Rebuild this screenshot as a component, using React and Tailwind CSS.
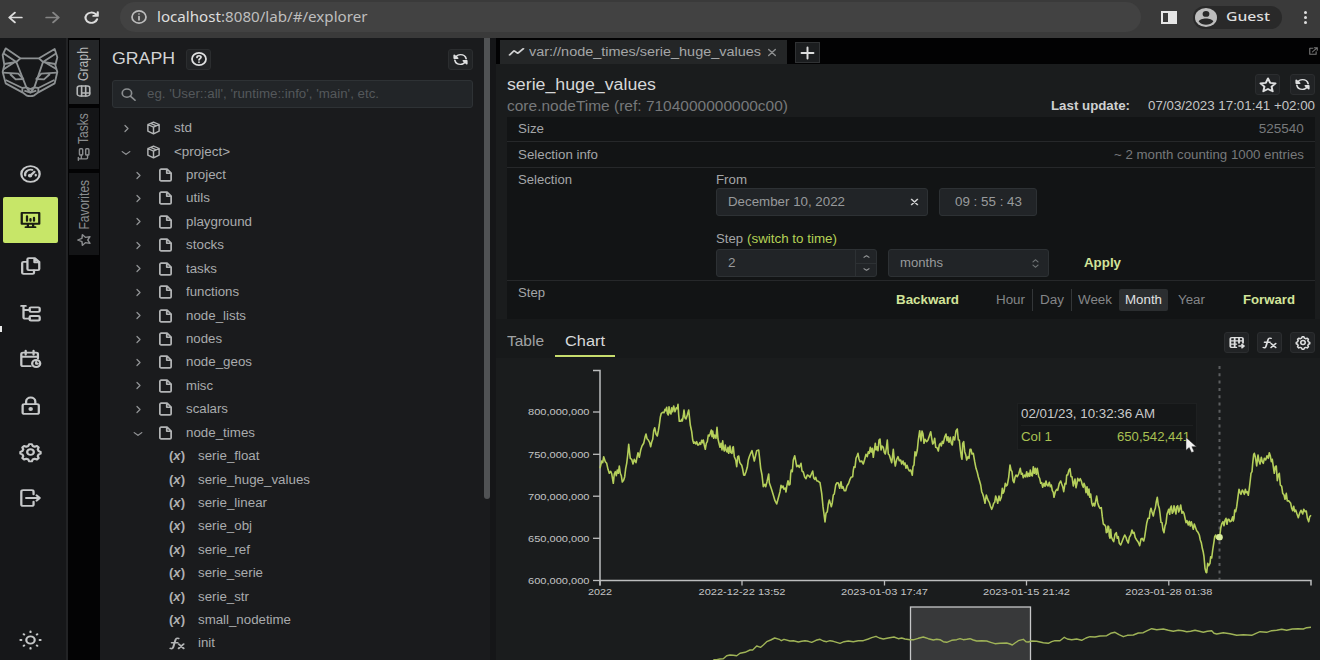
import { useLayoutEffect, useRef } from "react";

// Text squeezed or stretched to an exact width.
const T = ({ w, className = "", right = false, children }) => {
  const ref = useRef(null);

  useLayoutEffect(() => {
    const el = ref.current;
    el.style.transform = "none";
    const natural = el.getBoundingClientRect().width;
    el.style.transform = `scaleX(${w / natural})`;
  }, [w, children]);

  return (
    <span className={`flex shrink-0 whitespace-nowrap ${right ? "justify-end" : ""} ${className}`} style={{ width: w }}>
      <span ref={ref} className={`inline-block shrink-0 ${right ? "origin-right" : "origin-left"}`}>
        {children}
      </span>
    </span>
  );
};

// The vertical tabs are turned, so their box size has to come from the layout, not the screen.
const TurnedText = ({ w, children }) => {
  const ref = useRef(null);

  useLayoutEffect(() => {
    ref.current.style.transform = `scaleX(${w / ref.current.offsetWidth})`;
  }, [w, children]);

  return (
    <span className="flex shrink-0 whitespace-nowrap" style={{ width: w }}>
      <span ref={ref} className="inline-block shrink-0 origin-left">
        {children}
      </span>
    </span>
  );
};

const Svg = ({ className = "", sw = 2, children }) => (
  <svg
    viewBox="0 0 24 24"
    preserveAspectRatio="none"
    fill="none"
    stroke="currentColor"
    strokeWidth={sw}
    strokeLinecap="round"
    strokeLinejoin="round"
    className={`shrink-0 overflow-visible ${className}`}
  >
    {children}
  </svg>
);

const STAR = "M12 2l2.900 6.700 7.100.8-5.200 4.900 1.400 7.100-6.200-3.500-6.200 3.500 1.400-7.100L2 9.500l7.100-.8z";
const GEAR =
  "M9.500 4l1-2.500h3l1 2.500 2.300 1 2.500-1 2 2-1 2.500 1 2.200 2.200 1v2.600l-2.200 1-1 2.200 1 2.500-2 2-2.500-1-2.300 1-1 2.500h-3l-1-2.500-2.300-1-2.500 1-2-2 1-2.500-1-2.200-2.200-1v-2.600l2.200-1 1-2.200-1-2.500 2-2 2.500 1z";

const GLYPHS = {
  gauge: (
    <>
      <circle cx="12" cy="12" r="10.500" />
      <path d="M12 14l4.500-5M6 14a6.300 6.300 0 0 1 8-7.500M18 13v1" />
      <circle cx="11.500" cy="14" r="1.200" />
    </>
  ),
  monitor: (
    <>
      <path d="M2 2.500h20v14.500H2zM9 17v4M15 17v4M6.500 21.500h11" />
      <path d="M8 13V7M12 13v-2.500M16 13V9" />
    </>
  ),
  copy: (
    <>
      <path d="M10 1.500h7l5 5V16a1.500 1.500 0 0 1-1.500 1.500H10A1.500 1.500 0 0 1 8.500 16V3A1.500 1.500 0 0 1 10 1.500zM16.500 2v5H22" />
      <path d="M8 6.500H4A1.500 1.500 0 0 0 2.500 8v13A1.500 1.500 0 0 0 4 22.500h10.500A1.500 1.500 0 0 0 16 21v-3" />
    </>
  ),
  tree: (
    <>
      <path d="M1.500 2.500h5M4 3v14.500a2 2 0 0 0 2 2h5M4 8h7" />
      <rect x="11" y="4.500" width="11.500" height="6" rx="1.500" />
      <rect x="11" y="16" width="11.500" height="6" rx="1.500" />
    </>
  ),
  calendar: (
    <>
      <path d="M12 21.500H3.500A2 2 0 0 1 1.500 19.500V5.500a2 2 0 0 1 2-2h15a2 2 0 0 1 2 2V11M1.500 9h19M6.500 1v5M15.500 1v5" />
      <circle cx="18.500" cy="18" r="4.600" />
      <path d="M18.500 16v2.300h1.700" />
    </>
  ),
  lock: (
    <>
      <rect x="3" y="9.500" width="18.500" height="13" rx="2" />
      <path d="M7 9V6a5 5 0 0 1 10.500 0v3" />
      <circle cx="12.200" cy="16" r="1.300" fill="currentColor" />
    </>
  ),
  gear: (
    <>
      <path d={GEAR} />
      <circle cx="12" cy="12" r="3.800" />
    </>
  ),
  logout: <path d="M15.500 7V3.500a2 2 0 0 0-2-2h-10a2 2 0 0 0-2 2v17a2 2 0 0 0 2 2h10a2 2 0 0 0 2-2V17M7 12h15.500M19 8.500l3.500 3.500-3.500 3.500" />,
  sun: (
    <>
      <circle cx="12" cy="12" r="4.800" />
      <path d="M12 .5v1M12 22.500v1M.5 12h1M22.500 12h1M4.200 4.200l.6.6M19.200 19.200l.6.6M4.200 19.800l.6-.6M19.200 4.800l.6-.6" />
    </>
  ),
  box: <path d="M12 2l9 4v11.500L12 22l-9-4.500V6zM3 6l9 4.500L21 6M12 10.500V22M7.500 4l9 4.300" />,
  file: <path d="M5 2h9.500L21 8.500V20a2 2 0 0 1-2 2H5a2 2 0 0 1-2-2V4a2 2 0 0 1 2-2zM14 2.500V9h6.500" />,
  fx: (
    <>
      <path d="M2 21c3 1.500 4-.5 4.800-4L9.500 6c.8-3.500 2.500-4.500 5-3.300M4 10.500h9" />
      <path d="M14.500 13l7.500 8M22 13l-7.500 8" />
    </>
  ),
  refresh: (
    <>
      <path d="M4 8C6 4.500 9 3 12 3c4.500 0 8 2.800 9 7.500M20 16c-2 3.500-5 5-8 5-4.500 0-8-2.800-9-7.500" />
      <path d="M2 4v5.500h5.500zM22 20v-5.500h-5.500z" fill="currentColor" />
    </>
  ),
  star: <path d={STAR} />,
  table: (
    <>
      <path d="M11 21H4a2 2 0 0 1-2-2V5a2 2 0 0 1 2-2h15a2 2 0 0 1 2 2v8M2 9h19M2 15h9M8.500 3v18M15 3v10" />
      <path d="M15 18.500h7M19.500 15.500l3 3-3 3" />
    </>
  ),
  help: (
    <>
      <circle cx="12" cy="12" r="10.500" />
      <path d="M9 9.300c.2-3.800 6.200-3.500 6-.2-.1 2-3 2.300-3 4.400M12 17.200v.3" />
    </>
  ),
  right: <path d="M8 4l8 8-8 8" />,
  down: <path d="M3 8l9 8 9-8" />,
  up: <path d="M3 16l9-8 9 8" />,
  close: <path d="M4 4l16 16M20 4L4 20" />,
};

const Glyph = ({ name, className, sw }) => (
  <Svg className={className} sw={sw}>
    {GLYPHS[name]}
  </Svg>
);

const NAV = ["gauge", "monitor", "copy", "tree", "calendar", "lock", "gear", "logout"];

const TREE = [
  { label: "std", w: 18, level: 0 },
  { label: "<project>", w: 56, level: 0, open: true },
  { label: "project", w: 40, level: 1 },
  { label: "utils", w: 24, level: 1 },
  { label: "playground", w: 66, level: 1 },
  { label: "stocks", w: 38, level: 1 },
  { label: "tasks", w: 31, level: 1 },
  { label: "functions", w: 53, level: 1 },
  { label: "node_lists", w: 60, level: 1 },
  { label: "nodes", w: 36, level: 1 },
  { label: "node_geos", w: 66, level: 1 },
  { label: "misc", w: 27, level: 1 },
  { label: "scalars", w: 42, level: 1 },
  { label: "node_times", w: 69, level: 1, open: true },
  { label: "serie_float", w: 61.5, level: 2 },
  { label: "serie_huge_values", w: 112, level: 2 },
  { label: "serie_linear", w: 69, level: 2 },
  { label: "serie_obj", w: 54, level: 2 },
  { label: "serie_ref", w: 52, level: 2 },
  { label: "serie_serie", w: 65, level: 2 },
  { label: "serie_str", w: 51, level: 2 },
  { label: "small_nodetime", w: 93, level: 2 },
  { label: "init", w: 17, level: 2, fn: true },
];

const PAD = ["pl-[20px]", "pl-[32px]", "pl-[69px]"];

const BrowserBar = () => (
  <header className="flex h-[38px] shrink-0 items-center bg-[#3a3a3a] pb-[4px] font-['Noto_Sans',sans-serif] text-[#dcdcdc]">
    <Svg className="ml-[8px] h-[13px] w-[15px]" sw={3.200}>
      <path d="M22 12H3M11 3l-9 9 9 9" />
    </Svg>
    <Svg className="ml-[22px] h-[13px] w-[15px] text-[#858585]" sw={3.200}>
      <path d="M2 12h19M13 3l9 9-9 9" />
    </Svg>
    <Svg className="ml-[24px] h-[13px] w-[15px]" sw={3.400}>
      <path d="M21 15a9.500 9.500 0 1 1-2.500-9.500L21 8M22 2v7h-7" />
    </Svg>
    <div className="ml-[21px] flex h-[30px] w-[1021px] items-center rounded-full bg-[#424242] pl-[11px]">
      <Svg className="h-[14px] w-[16px] text-[#bdbdbd]" sw={2.600}>
        <circle cx="12" cy="12" r="10.500" />
        <path d="M12 11v6M12 6.800v.2" />
      </Svg>
      <T w={210.500} className="mt-[-1px] ml-[9.500px] text-[14px] text-[#bebebe]">
        <span className="text-[#dedede]">localhost</span>:8080/lab/#/explorer
      </T>
    </div>
    <div className="ml-[20px] flex h-[13px] w-[16px] justify-start bg-[#e6e6e6] p-[2px]">
      <div className="w-[5px] bg-[#3a3a3a]" />
    </div>
    <div className="ml-[16px] flex h-[23px] w-[89px] items-center rounded-full bg-[#292929] pl-[2px]">
      <svg viewBox="0 0 24 24" preserveAspectRatio="none" className="h-[19px] w-[22px]">
        <circle cx="12" cy="12" r="12" fill="#bdbdbd" />
        <circle cx="12" cy="7.500" r="3.700" fill="#292929" />
        <path d="M4 17c1.500-5 14.500-5 16 0-4 5.500-12 5.500-16 0z" fill="#292929" />
      </svg>
      <T w={44} className="ml-[9px] text-[13px] font-medium text-[#dedede]">
        Guest
      </T>
    </div>
    <div className="ml-[22px] flex flex-col gap-[2px]">
      <i className="size-[3px] rounded-full bg-[#dedede]" />
      <i className="size-[3px] rounded-full bg-[#dedede]" />
      <i className="size-[3px] rounded-full bg-[#dedede]" />
    </div>
  </header>
);

const Logo = () => (
  <svg viewBox="4 138 174 156" className="ml-[1px] h-[52px] w-[58px]" fill="none" stroke="#8d9193" strokeWidth="5.500" strokeLinejoin="round">
    <path d="M18 145L62 175H118L165 147L173 172L167 196L173 216L165 250L116 277L104 286Q92 291 80 286L68 277L18 250L9 216L14 195L9 165Z" />
    <path d="M11 160L50 186L62 175M170 160L130 186L118 175M14 192L50 186L80 262M167 192L130 186L104 262" />
    <path d="M42 188L12 208M138 188L171 208M10 218L56 221L71 237L48 238L31 222M172 218L125 221L110 237L133 238L151 222" />
    <path d="M18 240L68 264L80 262L92 267L104 262L116 264L164 240M68 264V277M116 277V264M74 272L92 278L110 272M80 262L92 278L104 262" />
  </svg>
);

const Sidebar = () => (
  <nav className="flex w-[68px] shrink-0 flex-col border-r-2 border-[#222325] bg-[#161719] pt-[8px] text-[#c6c8c9]">
    <Logo />
    <div className="mt-[52.500px] flex flex-col pl-[2.500px]">
      {NAV.map((name) => (
        <div
          key={name}
          className={`flex h-[46.400px] w-[55.500px] items-center justify-center ${name === "monitor" ? "rounded-[2px] bg-[#c7e668] text-[#1a1d12]" : ""}`}
        >
          <Glyph name={name} className="h-[18px] w-[21px]" sw={2.600} />
        </div>
      ))}
    </div>
    <div className="mt-[109px] flex w-[61px] justify-center">
      <Glyph name="sun" className="h-[18px] w-[21px]" sw={2.500} />
    </div>
  </nav>
);

const SideTab = ({ label, w, className, children }) => (
  <div className={`flex w-[30px] items-center justify-center ${className}`}>
    <div className="flex shrink-0 -rotate-90 items-center gap-[4px] text-[14px] leading-[16px]">
      {children}
      <TurnedText w={w}>{label}</TurnedText>
    </div>
  </div>
);

const SideTabs = () => (
  <div className="flex w-[32px] shrink-0 flex-col gap-[4px] bg-[#030304] pt-[2px] pl-[1px] text-[#8b8d8f]">
    <SideTab label="Graph" w={34} className="h-[64px] bg-[#242628] pr-[2px] text-[#b4b6b7]">
      <Svg className="h-[15px] w-[12px]" sw={2.600}>
        <rect x="2" y="2" width="20" height="20" rx="4" />
        <path d="M2 9h20M2 15.500h20M8 9v13" />
      </Svg>
    </SideTab>
    <SideTab label="Tasks" w={31} className="h-[61px] bg-[#141517] pr-[2px] pb-[3px]">
      <Glyph name="tree" className="h-[13px] w-[13px]" sw={2.600} />
    </SideTab>
    <SideTab label="Favorites" w={50} className="h-[82px] bg-[#141517] pr-[2px] pb-[3px]">
      <Glyph name="star" className="h-[15px] w-[13px]" sw={2.400} />
    </SideTab>
  </div>
);

const IconButton = ({ name, className = "", icon = "h-[13px] w-[15px]" }) => (
  <button className={`flex h-[21px] w-[25px] shrink-0 items-center justify-center rounded-[3px] border border-[#2b2d2f] bg-[#212325] text-[#dedfe0] ${className}`}>
    <Glyph name={name} className={icon} sw={2.700} />
  </button>
);

const TreeRow = ({ label, w, level, open, fn }) => (
  <div className={`flex h-[23.430px] items-center ${PAD[level]}`}>
    {level < 2 && (
      <span className="flex w-[12px] justify-center text-[#909294]">
        <Glyph name={open ? "down" : "right"} className={open ? "mt-[3px] h-[8px] w-[10px]" : "h-[9px] w-[9px]"} sw={3.400} />
      </span>
    )}
    {level === 0 && <Glyph name="box" className="ml-[14px] h-[14px] w-[15px] text-[#b2b4b5]" sw={2.300} />}
    {level === 1 && <Glyph name="file" className="ml-[14px] h-[14px] w-[15px] text-[#b2b4b5]" sw={2.800} />}
    {level === 2 && !fn && (
      <T w={16} className="text-[13px] leading-[16px] font-bold text-[#afb1b2]">
        (<i>x</i>)
      </T>
    )}
    {fn && <Glyph name="fx" className="h-[13px] w-[16px] text-[#b2b4b5]" sw={3} />}
    <T w={w} className="ml-[13px] text-[12.500px] leading-[16px] text-[#a9abad]">
      {label}
    </T>
  </div>
);

const GraphPanel = () => (
  <aside className="flex w-[396px] shrink-0 bg-[#1a1b1d]">
    <div className="flex w-[384px] flex-col">
      <div className="flex items-center pt-[10.500px] pr-[11px] pl-[12px]">
        <T w={63} className="text-[16px] leading-[20px] text-[#d3d4d5]">
          GRAPH
        </T>
        <IconButton name="help" className="ml-[11px]" icon="h-[14px] w-[16px]" />
        <IconButton name="refresh" className="ml-auto" />
      </div>
      <div className="mt-[10.500px] ml-[12px] flex h-[28px] w-[361px] items-center rounded-[3px] border border-[#2e3235] bg-[#222528] pl-[8px]">
        <Svg className="h-[13px] w-[15px] text-[#8b8e90]" sw={2.700}>
          <circle cx="9.500" cy="9.500" r="7.500" />
          <path d="M15 15l7.500 7.500" />
        </Svg>
        <T w={232} className="ml-[11px] text-[12.500px] text-[#54585b]">
          eg. 'User::all', 'runtime::info', 'main', etc.
        </T>
      </div>
      <div className="mt-[8.500px] flex flex-col">
        {TREE.map((row) => (
          <TreeRow key={row.label} {...row} />
        ))}
      </div>
    </div>
    <div className="h-[461px] w-[6px] rounded-b-[3px] bg-[#505254]" />
    <div className="ml-auto w-[6px] bg-[#151618]" />
  </aside>
);

const Field = ({ className = "", children }) => (
  <div className={`flex h-[28px] items-center rounded-[3px] border border-[#2d3134] bg-[#212427] text-[#989a9c] ${className}`}>{children}</div>
);

const Properties = () => (
  <section className="ml-[11px] flex w-[808px] flex-col bg-[#121415] text-[12.500px] leading-[16px] text-[#a4a6a8]">
    <div className="flex h-[25px] items-center justify-between border-b border-[#26282a] px-[11px]">
      <T w={26}>Size</T>
      <T w={45} right className="text-[#77797b]">
        525540
      </T>
    </div>
    <div className="flex h-[26px] items-center justify-between border-b border-[#26282a] px-[11px]">
      <T w={80}>Selection info</T>
      <T w={190} right className="text-[#77797b]">
        ~ 2 month counting 1000 entries
      </T>
    </div>
    <div className="flex h-[113px] border-b border-[#26282a] pt-[4px] pl-[11px]">
      <T w={54}>Selection</T>
      <div className="ml-[144px] flex flex-col">
        <T w={31}>From</T>
        <div className="flex gap-[11px]">
          <Field className="w-[212px] justify-between pr-[8px] pl-[11px]">
            <T w={117}>December 10, 2022</T>
            <Glyph name="close" className="h-[8px] w-[9px] text-[#cfd0d1]" sw={4} />
          </Field>
          <Field className="w-[98px] justify-center">
            <T w={67}>09 : 55 : 43</T>
          </Field>
        </div>
        <div className="mt-[15px] flex gap-[4px]">
          <T w={27}>Step</T>
          <T w={90} className="text-[#b5d156]">
            (switch to time)
          </T>
        </div>
        <div className="mt-[2px] flex items-center gap-[11px]">
          <Field className="w-[161px] justify-between pl-[11px]">
            <T w={7.500}>2</T>
            <div className="flex h-full w-[21px] flex-col border-l border-[#2d3134]">
              <span className="flex flex-1 items-center justify-center border-b border-[#2d3134]">
                <Glyph name="up" className="h-[5px] w-[7px]" sw={4} />
              </span>
              <span className="flex flex-1 items-center justify-center">
                <Glyph name="down" className="h-[5px] w-[7px]" sw={4} />
              </span>
            </div>
          </Field>
          <Field className="w-[161px] justify-between pr-[9px] pl-[11px]">
            <T w={43}>months</T>
            <Svg className="h-[9px] w-[7px] text-[#707476]" sw={3}>
              <path d="M3 8l9-6 9 6M3 16l9 6 9-6" />
            </Svg>
          </Field>
          <T w={37} className="ml-[24px] font-bold text-[#d2e49a]">
            Apply
          </T>
        </div>
      </div>
    </div>
    <div className="flex h-[38px] pl-[11px]">
      <T w={27} className="pt-[4px]">
        Step
      </T>
      <div className="ml-[351px] flex h-[37px] items-center text-[#848688]">
        <T w={63} className="font-bold text-[#d2e49a]">
          Backward
        </T>
        <T w={29} className="ml-[37px]">
          Hour
        </T>
        <div className="mx-[7px] h-[22px] w-px bg-[#333638]" />
        <T w={24}>Day</T>
        <div className="mx-[6.500px] h-[22px] w-px bg-[#333638]" />
        <T w={34}>Week</T>
        <div className="ml-[7px] flex h-[22px] w-[49px] items-center justify-center rounded-[2px] bg-[#2b2e30] text-[#e0e1e2]">
          <T w={37}>Month</T>
        </div>
        <T w={27} className="ml-[10px]">
          Year
        </T>
        <T w={52} className="ml-[37.500px] font-bold text-[#d2e49a]">
          Forward
        </T>
      </div>
    </div>
  </section>
);

// Series samples in thirds of a pixel, each run relative to its own left edge.
const SERIES = [
  {
    x: 500,
    pts: "300,325 305,303 308,308 311,290 316,305 320,310 324,328 328,340 332,334 335,341 340,370 343,342 346,335 349,347 352,330 355,340 358,318 361,340 364,347 367,366 371,360 374,350 377,325 380,310 383,285 386,253 389,280 391,295 395,298 399,312 403,298 408,308 411,292 414,278 418,292 422,270 426,258 431,250 435,232 438,222 441,236 445,240 449,248 452,260 455,246 458,238 461,212 464,203 468,222 472,228 475,213 478,195 481,172 484,160 488,157 492,158 495,148 497,152 500,142 502,160 505,165 507,140 510,158 513,162 515,143 518,155 521,138 525,155 529,143 532,146 534,133 536,165 538,184 542,184 545,178 547,183 550,168 552,150 555,174 558,177 562,165 566,150 569,178 571,195 575,215 578,240 581,250 584,246 587,252 590,245 593,255 596,255 599,248 602,253 605,241 608,248 610,240 613,255 616,268 619,250 622,245 625,225 628,228 631,220 634,210 636,230 638,213 641,235 644,225 648,235 651,202 654,237 657,250 660,262 663,250 666,270 668,242 670,262 673,273 676,255 678,270 681,276 684,262 686,280 690,258 692,277 696,280 698,262 700,260 703,290 707,300 710,320 713,290 716,288 719,307 722,312 725,316 728,328 731,345 734,346 738,335 742,322 745,300 748,290 752,280 756,272 760,290 763,303 767,285 770,272 776,270 779,297 782,325 786,345 790,380 794,373 797,380 801,365 806,342 808,368 812,380 816,392 820,405 825,422",
  },
  {
    x: 770,
    pts: "20,432 25,414 30,395 33,376 36,383 39,378 42,388 46,384 48,396 51,375 54,362 57,375 60,373 62,340 64,330 67,335 70,300 74,287 77,303 80,320 84,316 88,322 93,310 96,333 100,336 104,351 108,356 112,345 116,347 120,352 124,343 128,333 131,354 134,358 137,352 140,362 145,364 150,368 155,400 159,440 162,462 165,486 168,460 172,455 175,432 178,420 181,430 184,440 187,428 190,405 193,402 197,375 201,368 205,369 209,385 213,365 216,385 219,380 223,392 227,392 231,378 236,370 240,358 243,352 248,350 250,331 252,320 255,322 258,295 261,288 264,280 267,297 270,305 275,303 280,312 284,298 288,283 292,290 295,275 298,280 301,262 304,276 307,265 310,292 313,270 316,250 318,270 321,260 324,272 327,240 330,237 333,270 336,258 340,262 343,277 346,282 349,265 352,240 355,282 358,285 361,295 365,308 367,295 370,268 373,300 376,318 380,298 384,290 388,302 392,300 395,312 399,303 402,314 405,309 408,325 411,316 414,325 418,333 422,330 427,346 429,320 432,315 435,275 438,287 442,270 445,240 449,212 453,243 456,213 459,222 462,250 465,238 470,245 474,240 478,228 482,215 485,235 488,252 491,248 494,235 497,262 501,263 505,273 508,255 511,250 514,258 517,244 520,250 524,231 528,222 531,242 534,230 537,247 541,232 544,250 547,255 550,230 554,240 558,213 562,207 565,240 568,240 571,268 574,290 576,298 578,250 581,245 584,275 587,284 590,300 594,290 597,295 600,268 603,268 606,282 610,280 614,305 618,325 622,337 625,350 628,360 632,375 635,395 638,402 641,412 645,430 649,405 652,414 655,422 658,427 661,437 665,448 668,440 671,430 674,427 677,408 680,418 683,430 687,408 690,422 694,412 697,385 699,400 702,395 706,370 709,378 712,375 716,352 720,315 723,330 726,335 729,362 732,368 735,352 738,345 742,350 746,342 751,325 754,343 757,340 760,353 764,345 767,351 770,335 773,350 776,340 779,349 781,330 784,345 787,348 790,320 793,340 796,325 799,343 802,325 806,350 809,355 812,370 815,368 818,382 822,370 825,379 828,363 831,375",
  },
  {
    x: 1040,
    pts: "24,378 28,367 31,380 34,375 37,392 40,397 42,412 46,395 50,388 53,391 58,370 62,363 65,372 68,380 71,395 75,370 78,372 80,345 83,345 87,330 90,326 93,350 96,350 100,378 105,357 108,383 111,370 113,355 117,363 121,356 124,363 127,375 130,382 132,370 135,378 138,398 141,380 144,405 147,387 149,412 152,402 155,428 158,438 161,430 164,438 168,418 170,408 173,428 176,438 180,445 184,443 187,470 190,492 194,495 197,500 199,518 202,516 204,498 206,500 208,528 210,535 212,508 214,530 218,540 221,545 225,523 229,518 232,535 235,530 238,550 242,555 246,545 250,535 254,525 258,532 261,542 265,549 268,532 272,525 276,510 279,520 282,517 286,533 290,540 295,547 299,557 303,537 306,535 311,543 314,530 317,510 320,490 324,475 328,475 330,455 333,445 336,456 340,468 343,453 346,445 349,425 352,412 355,436 358,445 360,460 363,487 366,488 369,510 372,518 375,498 378,490 381,463 386,448 389,463 391,445 394,438 397,460 400,455 402,437 405,450 408,462 410,440 413,437 416,456 419,448 422,435 426,460 429,455 432,460 435,474 438,488 441,482 445,495 448,484 451,498 454,485 458,502 460,508 463,492 467,504 470,512 474,517 478,525 481,540 484,548 487,565 490,577 492,590 495,625 498,637 500,638 503,610 506,617 510,610 512,590 515,594 518,570 522,545 524,530 527,525 530,535 534,525 539,530 542,505 545,492 549,485 552,497 555,481 558,475 561,493 564,478 567,478 570,485 574,483 578,470 580,483 582,475 584,450 587,455 590,440 594,410 597,388 600,397 603,403 607,390 610,395 613,403 616,388 619,398 622,395 625,406 628,385 631,360 633,340 636,335 638,310 641,283 643,280 646,290 650,318 654,285 657,303 660,312 664,292 667,305 670,310 673,295 677,300 681,287 685,295 688,278 691,287 694,305 697,298 700,320 703,340 706,320 709,318 712,362 715,345 718,340 721,375 725,379 728,400 732,405 735,418 739,400 742,423 746,422 752,430 755,445 758,452 761,439 764,455 767,450 771,462 775,473 779,459 783,451 788,462 791,448 796,455 799,453 802,474 806,485 809,470 813,466",
  },
];

const OVERVIEW = [
  {
    x: 500,
    pts: "640,899 650,899 660,897 670,896 680,887 690,885 700,886 710,887 720,880 735,877 750,870 758,870 770,858 782,862 790,855 800,845 812,840 824,834 838,838",
  },
  {
    x: 770,
    pts: "34,842 42,838 60,843 70,842 85,846 95,844 105,842 115,844 125,847 138,841 150,838 160,843 170,845 180,842 190,844 200,847 210,850 222,845 235,843 250,845 265,842 280,842 295,837 305,833 318,829 328,834 340,837 355,834 372,831 385,836 395,834 405,837 420,839 432,839 445,835 460,831 475,836 490,840 500,838 510,839 520,845 530,847 545,841 560,839 570,836 580,839 590,838 600,836 610,840 620,843 635,842 650,843 662,847 675,851 690,850 710,849 720,852 727,855 735,849 745,842 760,838 768,845 775,846 785,843 800,844 820,848",
  },
  {
    x: 1040,
    pts: "25,850 35,845 45,842 60,842 73,832 82,837 95,839 110,837 125,841 138,834 150,830 165,831 180,828 200,827 212,820 225,817 237,824 250,830 262,826 280,825 295,819 310,818 322,812 335,806 350,809 370,807 385,811 400,814 415,811 428,812 440,815 452,814 465,811 478,814 490,817 502,814 515,812 522,820 530,822 550,818 570,821 590,826 610,824 635,826 648,820 660,815 680,817 695,812 710,811 725,808 740,811 757,807 775,806 790,807 800,803 813,802",
  },
];

const toPoints = (runs) =>
  runs
    .flatMap(({ x, pts }) =>
      pts.split(" ").map((p) => {
        const [px, py] = p.split(",").map(Number);
        return `${(x + px / 3).toFixed(1)},${(360 + py / 3).toFixed(1)}`;
      })
    )
    .join(" ");

const Y_TICKS = [
  { y: 412, label: "800,000,000" },
  { y: 454.3, label: "750,000,000" },
  { y: 496.2, label: "700,000,000" },
  { y: 538.3, label: "650,000,000" },
  { y: 580.5, label: "600,000,000" },
];

const X_TICKS = [
  { x: 600, label: "2022", w: 24 },
  { x: 742, label: "2022-12-22 13:52", w: 87 },
  { x: 884.5, label: "2023-01-03 17:47", w: 87 },
  { x: 1026.5, label: "2023-01-15 21:42", w: 87 },
  { x: 1168.8, label: "2023-01-28 01:38", w: 87 },
];

const Chart = () => (
  <div className="relative h-[302px] bg-[#1a1c1d]">
    <svg viewBox="496 358 824 302" className="h-full w-full" fontFamily="Liberation Sans, sans-serif" fontSize="9.5" fill="#c3c4c5">
      <path d="M593 370.500H600V580.500M600 585.500V580.500H1311V585.500" fill="none" stroke="#bcbdbe" strokeWidth="1.500" />
      {Y_TICKS.map(({ y, label }) => (
        <g key={label}>
          <path d={`M593 ${y}H600`} stroke="#bcbdbe" strokeWidth="1.300" />
          <text x="528" y={y + 3.4} textLength="61.500" lengthAdjust="spacingAndGlyphs">
            {label}
          </text>
        </g>
      ))}
      {X_TICKS.map(({ x, label, w }) => (
        <g key={label}>
          <path d={`M${x} 580V585.500`} stroke="#bcbdbe" strokeWidth="1.300" />
          <text x={x - w / 2} y="595" textLength={w} lengthAdjust="spacingAndGlyphs">
            {label}
          </text>
        </g>
      ))}
      <path d="M1219.500 366V580" stroke="#5c5e60" strokeWidth="2" strokeDasharray="3 4.300" />
      <polyline points={toPoints(SERIES)} fill="none" stroke="#b5cf5b" strokeWidth="1.600" strokeLinejoin="round" />
      <circle cx="1219.500" cy="537.300" r="3.300" fill="#d9ec9d" />
      <rect x="910.500" y="607" width="120" height="60" fill="#38393a" stroke="#c6c7c8" strokeWidth="1.300" />
      <polyline points={toPoints(OVERVIEW)} fill="none" stroke="#9fb357" strokeWidth="1.400" strokeLinejoin="round" />
    </svg>
    <div className="absolute top-[45px] left-[521px] flex h-[47px] w-[180px] flex-col border border-[#1e2021] bg-[#151718] px-[3px] pt-[2px] text-[12px] leading-[16px]">
      <T w={134} className="text-[#c9cacb]">
        02/01/23, 10:32:36 AM
      </T>
      <div className="mt-[3px] flex justify-between border-t border-[#1e2021] pt-[3px] pr-[3px] text-[#a9c152]">
        <T w={31}>Col 1</T>
        <T w={73}>650,542,441</T>
      </div>
    </div>
    <svg viewBox="0 0 12 18" preserveAspectRatio="none" className="absolute top-[79px] left-[689px] h-[17px] w-[12px]">
      <path d="M1 0.500V14l3.200-2.800 2.300 5.300 2.600-1.100-2.200-5.200h4.500z" fill="#f2f2f2" stroke="#2a2a2a" strokeWidth="0.500" />
    </svg>
  </div>
);

const Explorer = () => (
  <main className="flex w-[824px] flex-col bg-[#1a1c1d]">
    <div className="flex h-[26px] shrink-0 items-end bg-[#020203] pr-[2px] pl-[4px]">
      <div className="flex h-[24px] w-[287px] items-center bg-[#242627] pl-[9px] text-[12.500px] text-[#a4a6a7]">
        <Svg className="h-[8px] w-[15px] text-[#d0d1d2]" sw={3.600}>
          <path d="M1 21l7-13 6 8 9-14" />
        </Svg>
        <T w={232} className="ml-[5px]">
          var://node_times/serie_huge_values
        </T>
        <Glyph name="close" className="ml-[6px] h-[9px] w-[10px] text-[#8b8d8e]" sw={3.400} />
      </div>
      <div className="mb-px ml-[8px] flex h-[21px] w-[25px] items-center justify-center border border-[#303234] bg-[#1b1d1f]">
        <Svg className="h-[12px] w-[13px] text-[#dddede]" sw={3.600}>
          <path d="M12 1v22M1 12h22" />
        </Svg>
      </div>
      <Svg className="mb-[9px] ml-auto h-[8px] w-[9px] text-[#777]" sw={3}>
        <path d="M10 4H2v18h17v-8M9 15L22 2M14 2h8v8" />
      </Svg>
    </div>
    <div className="flex h-[53px] shrink-0 flex-col pr-[5px] pl-[11px]">
      <div className="flex items-center pt-[10px]">
        <T w={149} className="text-[16px] leading-[20px] text-[#d6d7d8]">
          serie_huge_values
        </T>
        <IconButton name="star" className="ml-auto" icon="h-[16px] w-[18px]" />
        <IconButton name="refresh" className="ml-[10px]" />
      </div>
      <div className="mt-[2px] flex items-center">
        <T w={281} className="text-[14px] leading-[18px] text-[#76787a]">
          core.nodeTime (ref: 7104000000000c00)
        </T>
        <T w={79} className="ml-auto text-[12.500px] leading-[18px] font-bold text-[#cfd0d1]">
          Last update:
        </T>
        <T w={167} className="ml-[18px] text-[12.500px] leading-[18px] text-[#c4c5c6]">
          07/03/2023 17:01:41 +02:00
        </T>
      </div>
    </div>
    <Properties />
    <div className="flex h-[39px] shrink-0 items-end bg-[#17191a] pr-[5px] pb-px text-[14px]">
      <div className="flex h-[31px] items-center px-[11px] text-[#a0a2a4]">
        <T w={37}>Table</T>
      </div>
      <div className="flex h-[31px] items-center border-b-2 border-[#c7dc6d] px-[10px] pt-[2px] text-[#d8d9da]">
        <T w={40}>Chart</T>
      </div>
      <div className="mb-[4px] ml-auto flex gap-[8px]">
        <IconButton name="table" icon="h-[13px] w-[16px]" />
        <IconButton name="fx" icon="h-[12px] w-[15px]" />
        <IconButton name="gear" icon="h-[13px] w-[14px]" />
      </div>
    </div>
    <Chart />
  </main>
);

export default function App() {
  return (
    <div className="relative flex h-[660px] w-[1320px] flex-col overflow-hidden bg-[#1a1c1d] font-['Liberation_Sans',Arial,sans-serif]">
      <BrowserBar />
      <div className="flex h-[622px]">
        <Sidebar />
        <SideTabs />
        <GraphPanel />
        <Explorer />
      </div>
      <div className="absolute top-[326px] left-0 h-[6px] w-[2px] bg-[#e8e8e8]" />
    </div>
  );
}
